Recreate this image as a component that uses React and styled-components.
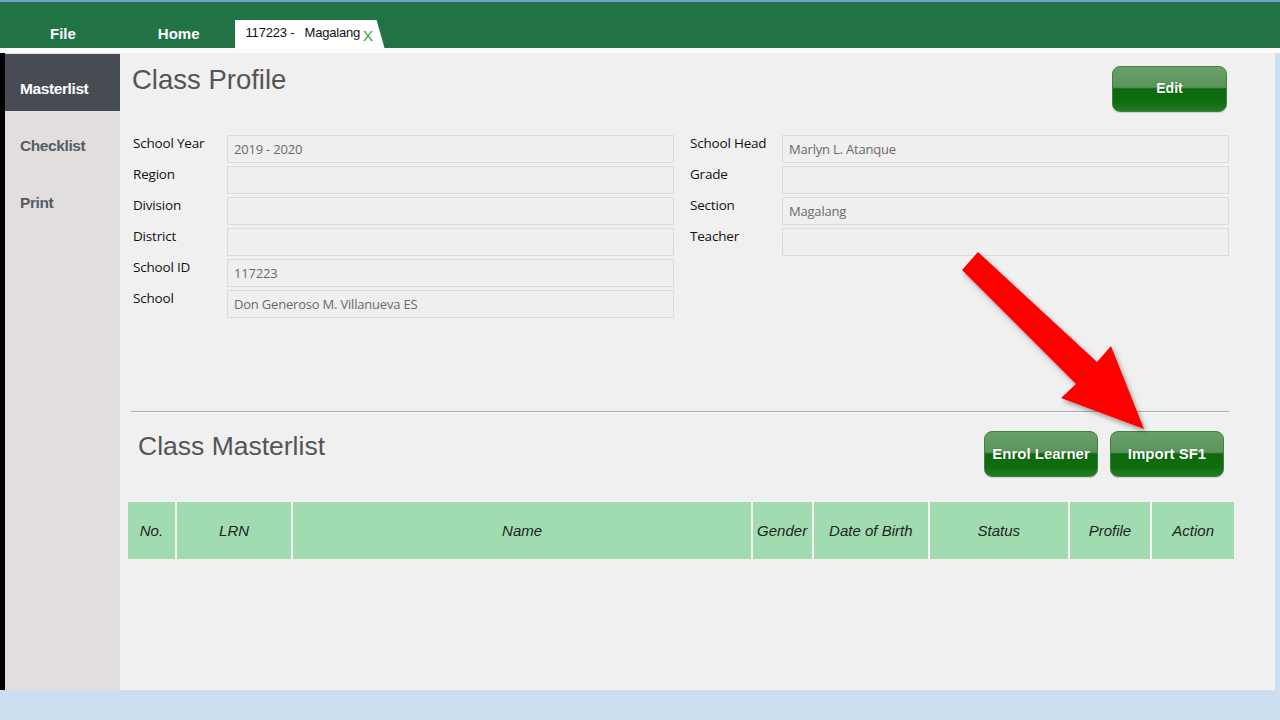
import React from "react";
import styled, { createGlobalStyle } from "styled-components";

const GlobalStyle = createGlobalStyle`
  html, body {
    margin: 0;
    padding: 0;
    background: #cbdff0;
  }
  * {
    box-sizing: border-box;
  }
`;

const leftFields = [
  { label: "School Year", value: "2019 - 2020" },
  { label: "Region", value: "" },
  { label: "Division", value: "" },
  { label: "District", value: "" },
  { label: "School ID", value: "117223" },
  { label: "School", value: "Don Generoso M. Villanueva ES" },
];

const rightFields = [
  { label: "School Head", value: "Marlyn L. Atanque" },
  { label: "Grade", value: "" },
  { label: "Section", value: "Magalang" },
  { label: "Teacher", value: "" },
];

const columns = [
  { name: "No.", width: 47 },
  { name: "LRN", width: 115 },
  { name: "Name", width: 459 },
  { name: "Gender", width: 59 },
  { name: "Date of Birth", width: 115 },
  { name: "Status", width: 138 },
  { name: "Profile", width: 81 },
  { name: "Action", width: 82 },
];

const sideItems = ["Masterlist", "Checklist", "Print"];

export default function App() {
  return (
    <Page>
      <GlobalStyle />
      <TopLine />
      <Ribbon>
        <RibbonItem $left={50}>File</RibbonItem>
        <RibbonItem $left={82}>Home</RibbonItem>
        <Tab>
          117223 -&nbsp;&nbsp; Magalang<TabClose>X</TabClose>
        </Tab>
      </Ribbon>
      <WhiteStrip />
      <Body>
        <EdgeStrip />
        <Sidebar>
          {sideItems.map((item, i) => (
            <SideItem key={item} $active={i === 0}>
              {item}
            </SideItem>
          ))}
        </Sidebar>
        <Main>
          <HeaderRow>
            <Title>Class Profile</Title>
            <GreenButton $top={13} $right={2} $width={115} $size={14}>
              Edit
            </GreenButton>
          </HeaderRow>
          <FormGrid>
            <FieldColumn $labelWidth={96}>
              {leftFields.map((f) => (
                <React.Fragment key={f.label}>
                  <Label>{f.label}</Label>
                  <Input>{f.value}</Input>
                </React.Fragment>
              ))}
            </FieldColumn>
            <FieldColumn $labelWidth={94}>
              {rightFields.map((f) => (
                <React.Fragment key={f.label}>
                  <Label>{f.label}</Label>
                  <Input>{f.value}</Input>
                </React.Fragment>
              ))}
            </FieldColumn>
          </FormGrid>
          <Divider />
          <MasterRow>
            <SubTitle>Class Masterlist</SubTitle>
            <ButtonGroup>
              <GreenButton $width={114} $size={15}>
                Enrol Learner
              </GreenButton>
              <GreenButton $width={114} $size={15}>
                Import SF1
              </GreenButton>
            </ButtonGroup>
          </MasterRow>
          <TableHead>
            {columns.map((c) => (
              <HeadCell key={c.name} $width={c.width}>
                {c.name}
              </HeadCell>
            ))}
          </TableHead>
        </Main>
        <EdgeBlue />
      </Body>
      <Arrow viewBox="0 0 1280 720" width="1280" height="720">
        <defs>
          <filter id="shadow" x="-20%" y="-20%" width="140%" height="140%">
            <feDropShadow dx="2" dy="3" stdDeviation="2.5" floodColor="#000" floodOpacity="0.35" />
          </filter>
        </defs>
        <polygon
          points="978,252 1097,362 1111,346 1144,429 1061,398 1076,384 962,270"
          fill="#ff0000"
          filter="url(#shadow)"
        />
      </Arrow>
    </Page>
  );
}

const Page = styled.div`
  // layout
  position: relative;
  width: 1280px;
  height: 720px;
  overflow: hidden;
  display: flex;
  flex-direction: column;

  // colours
  background: #cbdff0;
  font-family: "Liberation Sans", Arial, sans-serif;
`;

const TopLine = styled.div`
  height: 2px;
  background: #6f9fd6;
`;

const Ribbon = styled.div`
  // layout
  position: relative;
  display: flex;
  align-items: flex-end;
  height: 46px;

  // colours
  background: #217346;
`;

const RibbonItem = styled.div`
  // box model
  margin-left: ${(p) => p.$left}px;
  padding-bottom: 6px;

  // typography
  color: #ffffff;
  font-size: 15px;
  font-weight: bold;
`;

const Tab = styled.div`
  // layout
  display: flex;
  align-items: center;
  flex: none;
  height: 28px;
  width: 150px;
  margin-left: 35px;
  padding: 0 0 4px 11px;

  // shape
  background: #ffffff;
  clip-path: polygon(0 0, 142px 0, 150px 100%, 0 100%);

  // typography
  font-size: 13px;
  color: #111;
  letter-spacing: -0.2px;
`;

const TabClose = styled.span`
  margin: 6px 0 0 3px;
  color: #3c9a3c;
  font-size: 15px;
`;

const WhiteStrip = styled.div`
  height: 5px;
  background: #fbfbfb;
`;

const Body = styled.div`
  display: flex;
  height: 637px;
`;

const EdgeStrip = styled.div`
  flex: none;
  width: 5px;
  background: #000;
`;

const EdgeBlue = styled.div`
  flex: none;
  width: 5px;
  background: #cadff0;
`;

const Sidebar = styled.div`
  // layout
  display: flex;
  flex-direction: column;
  flex: none;
  width: 115px;
  padding-top: 1px;

  // colours
  background: #e1dedd;
`;

const SideItem = styled.div`
  // box model
  height: 57px;
  padding: 26px 0 0 15px;

  // colours
  background: ${(p) => (p.$active ? "#474c54" : "transparent")};
  color: ${(p) => (p.$active ? "#ffffff" : "#565b63")};

  // typography
  font-size: 15.5px;
  line-height: 18px;
  font-weight: bold;
  letter-spacing: -0.4px;
`;

const Main = styled.div`
  // layout
  display: flex;
  flex-direction: column;
  flex: 1;
  min-width: 0;
  padding: 0 46px 0 11px;

  // colours
  background: #f0f0f0;
`;

const HeaderRow = styled.div`
  display: flex;
  justify-content: space-between;
  align-items: flex-start;
  height: 82px;
`;

const Title = styled.h1`
  margin: 11px 0 0 1px;
  font-size: 27.5px;
  line-height: 32px;
  font-weight: normal;
  color: #555;
`;

const GreenButton = styled.div`
  // layout
  display: flex;
  align-items: center;
  justify-content: center;
  flex: none;
  width: ${(p) => p.$width}px;
  height: 46px;
  margin-top: ${(p) => p.$top || 0}px;
  margin-right: ${(p) => p.$right || 0}px;
  padding-bottom: 2px;

  // shape
  border-radius: 8px;
  border: 1px solid #3f7f3f;
  background: linear-gradient(
    to bottom,
    #68a268 0%,
    #5a945a 46%,
    #0c690c 50%,
    #0f6d0f 80%,
    #227d22 100%
  );
  box-shadow: 0 1px 1px rgba(0, 0, 0, 0.15);

  // typography
  color: #ffffff;
  font-size: ${(p) => p.$size}px;
  font-weight: bold;
  text-shadow: 0 0 1px rgba(0, 0, 0, 0.4);
`;

const FormGrid = styled.div`
  display: grid;
  grid-template-columns: 543px 541px;
  column-gap: 14px;
  align-items: start;
`;

const FieldColumn = styled.div`
  display: grid;
  grid-template-columns: ${(p) => p.$labelWidth}px 1fr;
  grid-auto-rows: 28px;
  row-gap: 3px;
`;

const Label = styled.div`
  padding-left: 2px;
  font-family: "Open Sans", "Noto Sans", sans-serif;
  font-size: 13.5px;
  line-height: 16px;
  color: #111;
  letter-spacing: -0.2px;
`;

const Input = styled.div`
  // layout
  display: flex;
  align-items: center;
  padding: 0 0 1px 6px;

  // box model
  border: 1px solid #dadada;
  background: #efefef;

  // typography
  font-family: "Open Sans", "Noto Sans", sans-serif;
  font-size: 13px;
  color: #6a6a6a;
  letter-spacing: -0.2px;
`;

const Divider = styled.div`
  margin-top: 93px;
  height: 1px;
  background: #a9a9a9;
  box-shadow: 0 1px 0 #fafafa;
`;

const MasterRow = styled.div`
  display: flex;
  justify-content: space-between;
  align-items: flex-start;
  padding: 19px 5px 0 7px;
`;

const SubTitle = styled.h2`
  margin: 0;
  font-size: 26.5px;
  line-height: 30px;
  font-weight: normal;
  color: #555;
`;

const ButtonGroup = styled.div`
  display: flex;
  gap: 12px;
`;

const TableHead = styled.div`
  display: flex;
  gap: 2px;
  height: 57px;
  margin: 25px -5px 0 -3px;
  background: #f4f4f4;
`;

const HeadCell = styled.div`
  // layout
  display: flex;
  align-items: center;
  justify-content: center;
  flex: 0 1 auto;
  width: ${(p) => p.$width}px;
  padding-bottom: 1px;

  // colours
  background: #a1dcb0;

  // typography
  font-size: 15px;
  font-style: italic;
  color: #222;
`;

const Arrow = styled.svg`
  position: absolute;
  left: 0;
  top: 0;
  pointer-events: none;
`;
